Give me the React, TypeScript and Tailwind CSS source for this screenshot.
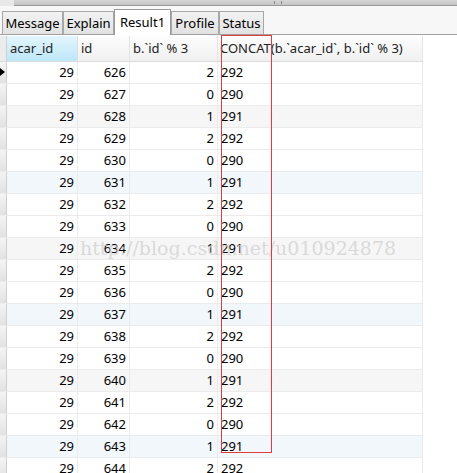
import React from "react";

const rows = Array.from({ length: 19 }, (_, i) => {
  const id = 626 + i;
  const mod = id % 3;
  return { acar: 29, id, mod, concat: `29${mod}` };
});

const tabs = [
  { label: "Message", w: "w-[61px]" },
  { label: "Explain", w: "w-[51px]" },
  { label: "Result1", w: "w-[57px]" },
  { label: "Profile", w: "w-[48px]" },
  { label: "Status", w: "w-[45px]" },
];

function rowBg(i: number) {
  if (i % 6 === 2) return "bg-[#f6f6f6]";
  if (i % 6 === 5) return "bg-[#f2f7fc]";
  return "bg-white";
}

export default function App() {
  return (
    <div
      className="relative h-[473px] w-[457px] overflow-hidden bg-white text-[13px] text-black"
      style={{ fontFamily: '"Noto Sans", "Open Sans", sans-serif' }}
    >
      {/* horizontal scrollbar remnant */}
      <div className="flex h-[6px]">
        <div className="w-[14px] bg-[#e8e8e8]" />
        <div className="flex flex-1 justify-center border-b border-[#9a9a9a] bg-gradient-to-b from-[#d6d6d6] to-[#c4c4c4]">
          <div className="ml-[84px] mt-[1px] h-[3px] w-[8px] border-x border-[#888]" />
        </div>
      </div>

      {/* tabs */}
      <div className="flex h-[29px] items-end border-b border-[#a0a0a0] bg-[#f7f7f7] pl-[2px]">
        {tabs.map((t) => {
          const active = t.label === "Result1";
          return (
            <div
              key={t.label}
              className={
                active
                  ? `relative -mb-px flex h-[26px] items-center justify-center border border-b-0 border-[#9a9a9a] bg-white leading-none ${t.w}`
                  : `flex h-[23px] items-center justify-center border border-b-0 border-[#a7a7a7] bg-gradient-to-b from-[#f2f2f2] to-[#e2e2e2] leading-none ${t.w}`
              }
            >
              {t.label}
            </div>
          );
        })}
      </div>

      {/* grid */}
      <div className="mt-[1px] w-[423px]">
        <div className="flex h-[26px] border-b border-[#dcdcdc] text-[#222]">
          <div className="w-[7px] border-r border-[#cfcfcf] bg-[#ececec]" />
          <div className="flex w-[71px] items-center border-r border-[#dfdfdf] bg-gradient-to-b from-[#e3f5fd] to-[#bde7f8] pl-[3px]">
            acar_id
          </div>
          <div className="flex w-[52px] items-center border-r border-[#e4e4e4] bg-gradient-to-b from-[#fdfdfd] to-[#f0f0f0] pl-[3px]">
            id
          </div>
          <div className="flex w-[88px] items-center border-r border-[#e4e4e4] bg-gradient-to-b from-[#fdfdfd] to-[#f0f0f0] pl-[3px]">
            b.`id` % 3
          </div>
          <div className="flex flex-1 items-center whitespace-nowrap border-r border-[#e4e4e4] bg-gradient-to-b from-[#fdfdfd] to-[#f0f0f0] pl-[2px]">
            CONCAT(b.`acar_id`, b.`id` % 3)
          </div>
        </div>

        {rows.map((r, i) => (
          <div key={r.id} className={`flex h-[22px] border-b border-[#ebebeb] ${rowBg(i)}`}>
            <div className="relative w-[7px] border-r border-[#cfcfcf] bg-gradient-to-b from-[#f4f4f4] to-[#e2e2e2]">
              {i === 0 && (
                <div className="absolute left-0 top-[6px] h-0 w-0 border-y-[4px] border-l-[5px] border-y-transparent border-l-black" />
              )}
            </div>
            <div className="flex w-[71px] items-center justify-end border-r border-[#ebebeb] pr-[3px]">
              {r.acar}
            </div>
            <div className="flex w-[52px] items-center justify-end border-r border-[#ebebeb] pr-[3px]">
              {r.id}
            </div>
            <div className="flex w-[88px] items-center justify-end border-r border-[#ebebeb] pr-[3px]">
              {r.mod}
            </div>
            <div className="flex flex-1 items-center border-r border-[#ebebeb] pl-[3px]">
              {r.concat}
            </div>
          </div>
        ))}
      </div>

      {/* watermark */}
      <div
        className="pointer-events-none absolute left-[80px] top-[234px] whitespace-nowrap text-[19px] text-[#d2d2d2]/80"
        style={{ fontFamily: '"DejaVu Serif", "Liberation Serif", serif' }}
      >
        http://blog.csdn.net/u010924878
      </div>

      {/* red highlight box */}
      <div className="pointer-events-none absolute left-[221px] top-[35px] h-[418px] w-[51px] border border-[#e23b3b]" />
    </div>
  );
}
